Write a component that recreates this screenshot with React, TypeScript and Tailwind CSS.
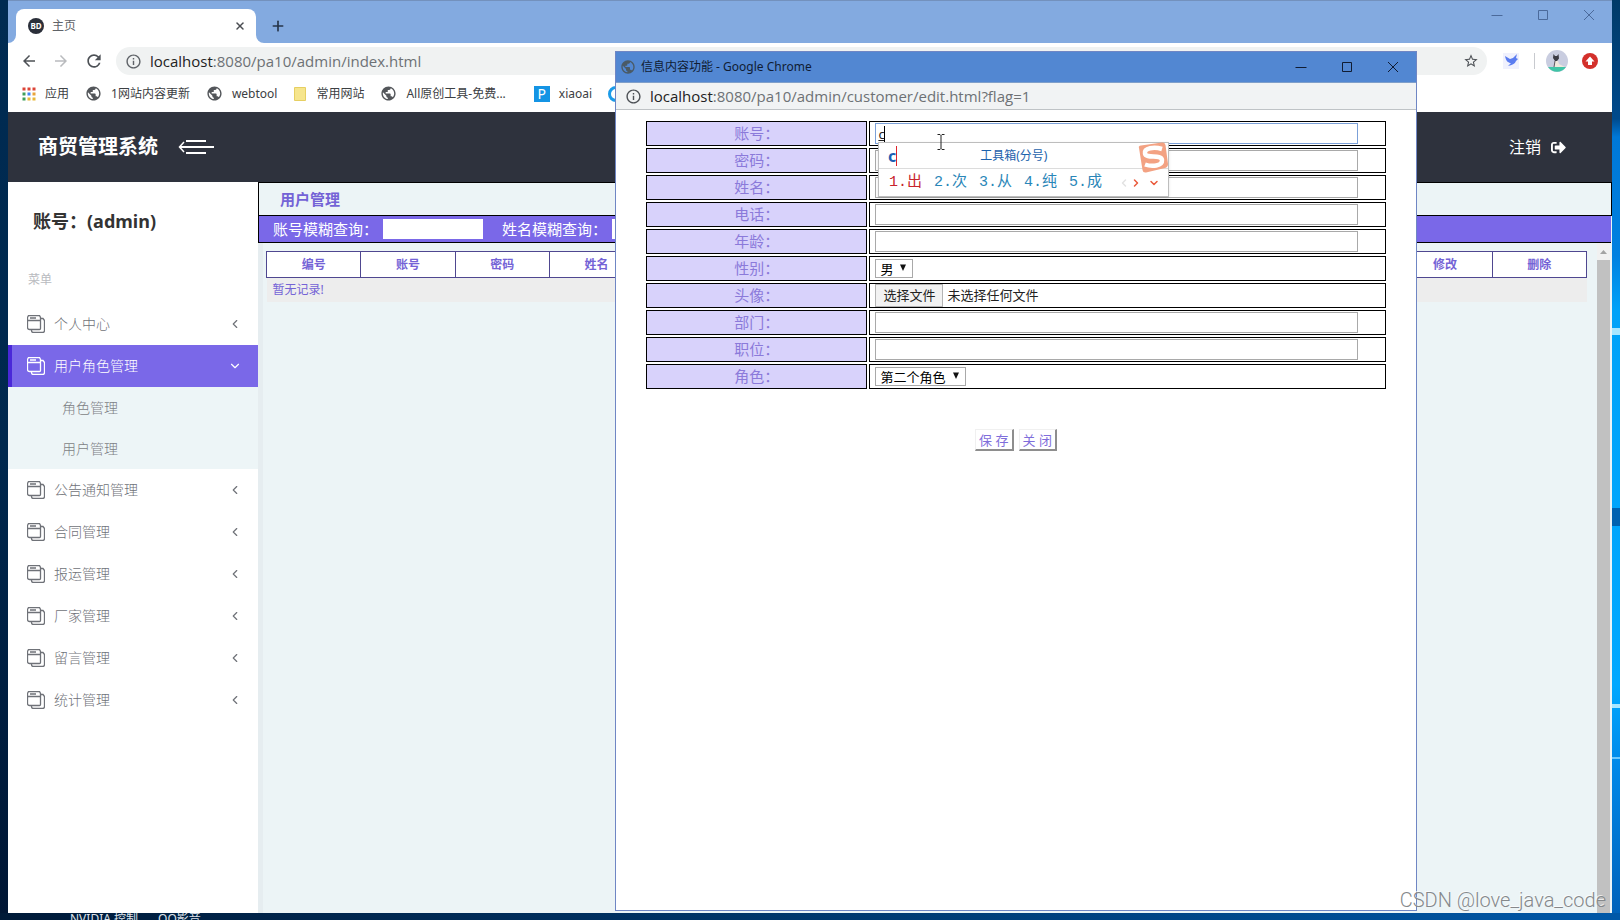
import React from "react";
import {
  MdArrowBack,
  MdArrowForward,
  MdInfoOutline,
  MdPublic,
  MdRefresh,
  MdStarBorder,
} from "react-icons/md";
import { FaSignOutAlt } from "react-icons/fa";
import { ChevronDown, ChevronLeft, ChevronRight, Plus, X } from "lucide-react";

const FONT = "font-['Noto_Sans','Noto_Sans_CJK_SC',sans-serif]";

function WindowButtons({ gap, color }: { gap: string; color: string }) {
  return (
    <div className={`flex items-center ${gap} ${color}`}>
      <button aria-label="最小化" className="block">
        <svg className="block size-3" viewBox="0 0 12 12" stroke="currentColor">
          <path d="M0.5 6.5h11" />
        </svg>
      </button>
      <button aria-label="最大化" className="block">
        <svg className="block size-3" viewBox="0 0 12 12" stroke="currentColor" fill="none">
          <path d="M1.5 1.5h9v9h-9z" />
        </svg>
      </button>
      <button aria-label="关闭窗口" className="block">
        <svg className="block size-3" viewBox="0 0 12 12" stroke="currentColor">
          <path d="M1 1l10 10M11 1L1 11" />
        </svg>
      </button>
    </div>
  );
}

function TabStrip() {
  return (
    <div className="flex h-[43px] shrink-0 items-end bg-[#83aae0] border-t border-[#7391bd] pl-2 pr-[17px]">
      <div className="relative flex h-[34px] w-60 items-center gap-2 rounded-t-lg bg-white pl-3 pr-[10px]">
        <svg className="absolute bottom-0 -left-2 size-2" viewBox="0 0 8 8">
          <path d="M8 0v8H0a8 8 0 0 0 8-8z" fill="#fff" />
        </svg>
        <svg className="absolute bottom-0 -right-2 size-2" viewBox="0 0 8 8">
          <path d="M0 0v8h8a8 8 0 0 1-8-8z" fill="#fff" />
        </svg>
        <span className="flex size-4 items-center justify-center rounded-full bg-[#2b2f3a] text-[8px] font-bold text-white">
          BD
        </span>
        <span className="flex-1 text-xs text-[#5f6368]">主页</span>
        <button aria-label="关闭标签页">
          <X className="size-3 text-[#4a4d52]" strokeWidth={3} />
        </button>
      </div>
      <button aria-label="新标签页" className="mb-[9px] ml-[14px]">
        <Plus className="size-4 text-[#26354a]" strokeWidth={2.5} />
      </button>
      <div className="ml-auto mb-[22px]">
        <WindowButtons gap="gap-[34px]" color="text-[#4b6a9b]" />
      </div>
    </div>
  );
}

function AddressBar() {
  return (
    <div className="flex h-9 shrink-0 items-center bg-white pl-3 pr-[14px]">
      <div className="flex items-center gap-[14px]">
        <button aria-label="后退"><MdArrowBack className="size-[18px] text-[#4d5156]" /></button>
        <button aria-label="前进"><MdArrowForward className="size-[18px] text-[#b9bbbe]" /></button>
        <button aria-label="刷新"><MdRefresh className="size-5 text-[#4d5156]" /></button>
      </div>
      <div className="ml-3 flex h-7 flex-1 items-center gap-2 rounded-full bg-[#f0f2f2] pl-[9px] pr-2">
        <MdInfoOutline className="size-[17px] text-[#5f6368]" />
        <div className="flex-1 font-['Open_Sans',sans-serif] text-[15px] leading-6 text-[#6d7175]">
          <span className="text-[#222]">localhost</span>:8080/pa10/admin/index.html
        </div>
        <button aria-label="收藏"><MdStarBorder className="size-4 text-[#4d5156]" /></button>
      </div>
      <svg className="ml-4 size-4 bg-[#f0f1fd]" viewBox="0 0 16 16">
        <path d="M2 3l5 3 3-1 4-4-1 4 2 1-2 2c-1 3-4 4-8 5l3-3C5 10 3 8 2 3z" fill="#5a7cf0" />
      </svg>
      <span className="ml-[15px] h-4 w-px bg-[#c8cacf]" />
      <svg className="ml-[11px] size-[22px]" viewBox="0 0 22 22">
        <circle cx="11" cy="11" r="11" fill="#c9cde0" />
        <path d="M2 17h18a11 11 0 0 1-18 0z" fill="#3fc4a6" />
        <path d="M7.500 4l1.500 2h2l1.500-2 0.500 4.500-2 2.500h-2l-2-3z" fill="#3b3c45" />
        <path d="M9 11h3l1 3 6 3H8z" fill="#efe7dc" />
        <path d="M9 11l-1 6" stroke="#5a5560" />
      </svg>
      <svg className="ml-[14px] size-4" viewBox="0 0 16 16">
        <circle cx="8" cy="8" r="8" fill="#d3302b" />
        <path d="M8 3.500L12.500 8.500H10V12H6V8.500H3.500z" fill="#fff" />
      </svg>
    </div>
  );
}

const appDots = [
  "#dc4437", "#dc4437", "#dc4437",
  "#3f9e5a", "#4285f4", "#e8a33a",
  "#3f9e5a", "#e8b83a", "#e8b83a",
];

function AppsIcon() {
  return (
    <svg className="size-[14px]" viewBox="0 0 14 14">
      {appDots.map((c, i) => (
        <rect key={i} x={(i % 3) * 5 + 0.5} y={Math.floor(i / 3) * 5 + 0.5} width="3" height="3" fill={c} />
      ))}
    </svg>
  );
}

function Globe() {
  return <MdPublic className="size-[17px] text-[#53565a]" />;
}

function Bookmark({ icon, label }: { icon: React.ReactNode; label: string }) {
  return (
    <a href="#" className="flex shrink-0 items-center gap-[9px]">
      {icon}
      <span>{label}</span>
    </a>
  );
}

function BookmarkBar() {
  return (
    <nav className="flex h-[33px] shrink-0 items-center gap-4 overflow-hidden bg-white pl-[14px] pb-1 text-xs text-[#3c4043]">
      <Bookmark icon={<AppsIcon />} label="应用" />
      <Bookmark icon={<Globe />} label="1网站内容更新" />
      <Bookmark icon={<Globe />} label="webtool" />
      <Bookmark
        icon={
          <svg className="size-[14px]" viewBox="0 0 14 14">
            <path d="M1.500 0.500h11v13h-11z" fill="#f6e58c" stroke="#e6cf62" />
          </svg>
        }
        label="常用网站"
      />
      <Bookmark icon={<Globe />} label="All原创工具-免费..." />
      <div className="ml-3 flex gap-4">
        <Bookmark
          icon={<span className="flex size-4 items-center justify-center bg-[#1494e4] text-sm leading-4 text-white">P</span>}
          label="xiaoai"
        />
        <svg className="size-4" viewBox="0 0 16 16">
          <circle cx="8" cy="8" r="6.500" fill="none" stroke="#1b9be8" strokeWidth="3" />
        </svg>
      </div>
    </nav>
  );
}

function AppHeader() {
  return (
    <header className="flex h-[70px] shrink-0 items-center bg-[#2e323d] pl-[30px] pr-[46px] text-white">
      <h1 className="text-xl font-bold">商贸管理系统</h1>
      <button aria-label="收起菜单" className="ml-5">
        <svg className="h-4 w-9" viewBox="0 0 36 16" fill="none" stroke="currentColor" strokeWidth="2">
          <path d="M8 2h20M2 8h34M8 14h20" />
          <path d="M6 3L1.500 8 6 13" strokeWidth="1.500" />
        </svg>
      </button>
      <a href="#" className="ml-auto flex items-center gap-[10px] text-base">
        注销
        <FaSignOutAlt className="size-[15px]" />
      </a>
    </header>
  );
}

function MenuIcon() {
  return (
    <svg className="size-[18px]" viewBox="0 0 18 18" fill="none" stroke="currentColor">
      <path d="M0.500 2.500L1.500 0.500h11l1 2v11a1 1 0 0 1-1 1h-10a2 2 0 0 1-2-2z" strokeWidth="1.300" />
      <path d="M0.500 5.500h13M3 3h6M14 3.500h2l1.500 2v10a2 2 0 0 1-2 2H6.500a2 2 0 0 1-2-2v-1" strokeWidth="1.300" />
    </svg>
  );
}

function MenuItem({ label, active }: { label: string; active?: boolean }) {
  return (
    <li>
      <button
        className={
          active
            ? "flex h-[42px] w-full items-center gap-[9px] border-l-4 border-[#4a28d8] bg-[#7a68e8] pl-[15px] pr-4 text-white"
            : "flex h-[42px] w-full items-center gap-[9px] pl-[19px] pr-4 text-[#6f7278]"
        }
      >
        <MenuIcon />
        <span className="flex-1 text-left text-sm font-light">{label}</span>
        {active ? <ChevronDown className="size-[14px]" /> : <ChevronLeft className="size-[14px]" />}
      </button>
    </li>
  );
}

function Sidebar() {
  return (
    <aside className="w-[250px] shrink-0 bg-white">
      <p className="px-[25px] pt-[27px] text-lg leading-6 font-bold text-[#333]">账号：(admin)</p>
      <p className="pt-[39px] pb-3 pl-5 text-xs leading-4 text-[#b9bbc0]">菜单</p>
      <ul className="pt-[3px]">
        <MenuItem label="个人中心" />
        <MenuItem label="用户角色管理" active />
        <li>
          <ul className="bg-[#edf5f7] text-sm font-light text-[#7d7f85]">
            {["角色管理", "用户管理"].map((t) => (
              <li key={t}>
                <a href="#" className="flex h-[41px] items-center pl-[54px]">{t}</a>
              </li>
            ))}
          </ul>
        </li>
        {["公告通知管理", "合同管理", "报运管理", "厂家管理", "留言管理", "统计管理"].map((t) => (
          <MenuItem key={t} label={t} />
        ))}
      </ul>
    </aside>
  );
}

function UserPanel() {
  const th = "h-[26px] border border-[#4f4790] bg-white font-bold";
  return (
    <main className="flex min-w-0 flex-1 flex-col bg-[#ecf4f6]">
      <h2 className="flex h-[34px] shrink-0 items-center border border-black pl-[21px] text-[15px] font-bold text-[#7463d6]">
        用户管理
      </h2>
      <div className="mr-px flex h-[27px] shrink-0 items-center border-b border-l border-black bg-[#7a68e8] pl-[14px] text-[15px] text-white">
        <label className="flex items-center gap-[5px]">
          账号模糊查询：
          <input className="h-5 w-[100px] bg-white px-1 text-xs text-black" />
        </label>
        <label className="ml-[19px] flex items-center gap-[5px]">
          姓名模糊查询：
          <input className="h-5 w-[100px] bg-white px-1 text-xs text-black" />
        </label>
      </div>
      <div className="flex min-h-0 flex-1">
        <div className="min-w-0 flex-1 border-l-[5px] border-[#e6edf0] pt-2 pl-[3px] pr-[10px]">
          <table className="w-full table-fixed border-collapse text-xs text-[#7463d6]">
            <thead>
              <tr>
                <th className={th}>编号</th>
                <th className={th}>账号</th>
                <th className={th}>密码</th>
                <th className={th}>姓名</th>
                <th className={th} colSpan={8} />
                <th className={th}>修改</th>
                <th className={th}>删除</th>
              </tr>
            </thead>
            <tbody>
              <tr>
                <td colSpan={14} className="h-6 bg-[#ededed] pl-[6px]">暂无记录!</td>
              </tr>
            </tbody>
          </table>
        </div>
        <div className="mr-[2px] flex w-[13px] flex-col bg-[#f1f1f1]">
          <svg className="h-[17px] w-[13px] shrink-0" viewBox="0 0 13 17">
            <path d="M3 11l3.500-4 3.500 4z" fill="#a3a3a3" />
          </svg>
          <span className="flex-1 bg-[#c1c1c1]" />
        </div>
      </div>
    </main>
  );
}

function FormRow({ id, label, children }: { id: string; label: string; children: React.ReactNode }) {
  return (
    <tr>
      <td className="h-[25px] w-[30%] border border-black bg-[#d8d2fb] p-0 text-center text-[15px] leading-[23px] text-[#8b7ada]">
        <label htmlFor={id}>{label}：</label>
      </td>
      <td className="h-[25px] border border-black bg-white py-0 pr-[27px] pl-[5px]">{children}</td>
    </tr>
  );
}

const textInput = "block h-[21px] w-full border border-[#a9a9a9] bg-white px-[2px] text-[13px] leading-4 text-[#333] outline-none";

function SelectBox({ id, width, value }: { id: string; width: string; value: string }) {
  return (
    <div className={`relative ${width}`}>
      <select id={id} className="block h-[19px] w-full appearance-none rounded-none border border-[#a9a9a9] bg-white pl-1 text-[13px] leading-4 text-black">
        <option>{value}</option>
      </select>
      <svg className="pointer-events-none absolute top-[5px] right-[6px] size-2" viewBox="0 0 8 8">
        <path d="M1 0.500h6L4 7z" fill="#111" />
      </svg>
    </div>
  );
}

function EditForm() {
  return (
    <form className="px-[28px] pt-[9px]">
      <table className="w-full table-fixed border-separate border-spacing-[2px]">
        <tbody>
          <FormRow id="account" label="账号">
            <div className="relative">
              <input
                id="account"
                defaultValue="c"
                className="block h-[21px] w-full border border-[#7ba0d8] bg-white px-[2px] text-[13px] leading-4 text-[#222] underline outline-none"
              />
              <span className="absolute top-[3px] left-[9px] h-4 w-px bg-black" />
            </div>
          </FormRow>
          <FormRow id="password" label="密码"><input id="password" className={textInput} /></FormRow>
          <FormRow id="name" label="姓名"><input id="name" className={textInput} /></FormRow>
          <FormRow id="phone" label="电话"><input id="phone" className={textInput} /></FormRow>
          <FormRow id="age" label="年龄"><input id="age" className={textInput} /></FormRow>
          <FormRow id="gender" label="性别"><SelectBox id="gender" width="w-[38px]" value="男" /></FormRow>
          <FormRow id="avatar" label="头像">
            <label className="relative flex items-center gap-1 text-[13px] leading-[21px] text-[#222]">
              <input id="avatar" type="file" className="sr-only" />
              <span className="border border-[#b4b4b4] bg-[#f2f2f2] px-[7px]">选择文件</span>
              <span>未选择任何文件</span>
            </label>
          </FormRow>
          <FormRow id="department" label="部门"><input id="department" className={textInput} /></FormRow>
          <FormRow id="position" label="职位"><input id="position" className={textInput} /></FormRow>
          <FormRow id="role" label="角色"><SelectBox id="role" width="w-[91px]" value="第二个角色" /></FormRow>
        </tbody>
      </table>
      <div className="mt-[38px] flex justify-center gap-[5px] text-[13px] text-[#7f6edb]">
        {["保 存", "关 闭"].map((t) => (
          <button key={t} type="button" className="h-[22px] border-t border-r-2 border-b-2 border-l border-t-[#f0f0f0] border-r-[#8e8e8e] border-b-[#8e8e8e] border-l-[#f0f0f0] bg-white px-[3px] leading-[18px]">
            {t}
          </button>
        ))}
      </div>
    </form>
  );
}

function ImePanel() {
  const candidates = ["2.次", "3.从", "4.纯", "5.成"];
  return (
    <div className="absolute top-[90px] left-[262px] flex h-[55px] w-[291px] flex-col border border-[#bdbdbd] bg-white shadow-sm">
      <div className="flex h-[26px] items-center border-b border-[#dcdcdc] pl-[9px]">
        <span className="border-r border-[#e0242c] text-base leading-5 font-bold text-[#1b5fb4]">c</span>
        <span className="ml-[83px] text-xs text-[#1d62ac]">工具箱(分号)</span>
      </div>
      <div className="flex flex-1 items-center gap-3 pt-px pl-[10px] font-['Liberation_Mono','Noto_Sans_CJK_SC',monospace] text-[15px] text-[#2a86b8]">
        <span className="text-[#c8232c]">1.出</span>
        {candidates.map((c) => (
          <span key={c}>{c}</span>
        ))}
        <span className="ml-1 flex items-center text-[#ea5a3c]">
          <ChevronLeft className="size-3 text-[#e2e2e2]" strokeWidth={3} />
          <ChevronRight className="size-3" strokeWidth={3} />
          <ChevronDown className="ml-[6px] size-3" strokeWidth={3} />
        </span>
      </div>
      <svg className="absolute -top-px right-0 h-8 w-[31px]" viewBox="0 0 31 32">
        <path d="M2 6Q1 4 4 3.500L25 0.500Q28 0 28.500 3L31 22Q31 25 28 26L9 30.500Q6 31 5.500 28z" fill="#f3a283" />
        <path d="M25 7C17 4.500 7 6 8 11.500C9 17 24.500 12 25 18C25.500 24 15 25 8 22.500" fill="none" stroke="#fff" strokeWidth="4.500" />
      </svg>
    </div>
  );
}

function PopupWindow() {
  return (
    <section className="absolute top-[51px] left-[615px] flex h-[860px] w-[802px] flex-col border border-[#6f86c4] bg-white">
      <div className="flex h-[31px] shrink-0 items-center border-b border-[#7f9fca] bg-[#5287d2] pr-[17px] pl-1 text-xs text-[#101c33]">
        <MdPublic className="size-4 text-[#4a5a66]" />
        <span className="ml-[5px] flex-1">信息内容功能 - Google Chrome</span>
        <WindowButtons gap="gap-[34px]" color="text-[#101c33]" />
      </div>
      <div className="flex h-[27px] shrink-0 items-center gap-2 border-b border-[#bfc3c6] bg-[#f1f3f4] pl-[9px] font-['Open_Sans',sans-serif] text-[15px] text-[#6d7175]">
        <MdInfoOutline className="size-[17px] text-[#4d5156]" />
        <div>
          <span className="text-[#222]">localhost</span>:8080/pa10/admin/customer/edit.html?flag=1
        </div>
      </div>
      <EditForm />
      <ImePanel />
      <svg className="absolute top-[82px] left-[321px] h-4 w-2" viewBox="0 0 8 16" stroke="#222" fill="none">
        <path d="M0.500 0.500h2.500l1 1 1-1h2.500M4 1.500v13M0.500 15.500h2.500l1-1 1 1h2.500" />
      </svg>
    </section>
  );
}

export default function App() {
  return (
    <div className={`${FONT} relative flex h-screen flex-col overflow-hidden bg-linear-to-r from-[#001a38] to-[#0058a8]`}>
      <div className="flex min-h-0 flex-1">
        <div className="w-2 shrink-0 bg-linear-to-b from-[#002b52] via-[#00284e] to-[#001634]" />
        <div className="flex min-w-0 flex-1 flex-col">
          <TabStrip />
          <AddressBar />
          <BookmarkBar />
          <AppHeader />
          <div className="flex min-h-0 flex-1">
            <Sidebar />
            <UserPanel />
          </div>
        </div>
        <svg className="h-full w-2 shrink-0" viewBox="0 0 8 913" preserveAspectRatio="none">
          <defs>
            <linearGradient id="sky" x1="0" y1="0" x2="0" y2="1">
              <stop offset="0" stopColor="#003a68" />
              <stop offset="0.130" stopColor="#004a8c" />
              <stop offset="0.150" stopColor="#0078d7" />
              <stop offset="0.280" stopColor="#0080e0" />
              <stop offset="0.340" stopColor="#00a2f8" />
              <stop offset="0.750" stopColor="#00a8ff" />
              <stop offset="0.840" stopColor="#0088e8" />
              <stop offset="1" stopColor="#0062ba" />
            </linearGradient>
          </defs>
          <path d="M0 0h8v913H0z" fill="url(#sky)" />
          <path d="M0 328h8v7H0zM0 704h8v4H0z" fill="#a8e6ff" />
          <path d="M0 757h8v2H0z" fill="#6cc8ff" />
          <path d="M0 508h8v18H0z" fill="#0062b0" />
        </svg>
      </div>
      <div className="flex h-[7px] shrink-0 gap-5 overflow-hidden pl-[70px] text-xs leading-3 text-[#dfe3ea]">
        <span>NVIDIA 控制</span>
        <span>QQ影音</span>
      </div>
      <PopupWindow />
      <div className="absolute right-[14px] bottom-2 font-['Roboto',sans-serif] text-xl leading-6 font-light text-[#85888b] [text-shadow:-1px_-1px_0_#ffffffb0]">
        CSDN @love_java_code
      </div>
    </div>
  );
}
